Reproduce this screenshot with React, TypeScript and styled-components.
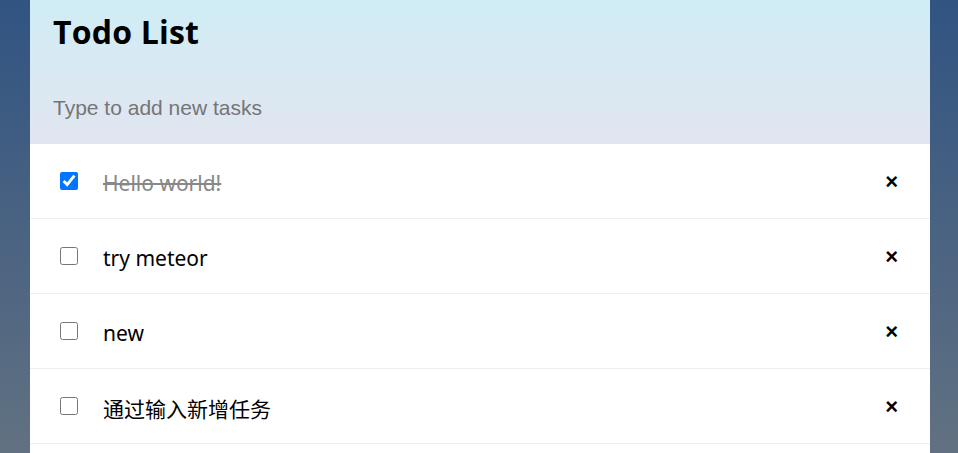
import React, { useState } from "react";
import styled, { createGlobalStyle } from "styled-components";

const GlobalStyle = createGlobalStyle`
    html, body {
        margin: 0;
        padding: 0;
    }
    body {
        font-family: "Noto Sans", "Noto Sans CJK SC", sans-serif;
        background-color: #315481;
        background-image: linear-gradient(to bottom, #315481, #918e82 900px);
        min-height: 453px;
        overflow: hidden;
    }
`;

const Page = styled.div`
    min-height: 453px;
    padding: 0 28px 0 30px;
`;

const Container = styled.div`
    background: #ffffff;
    min-height: 453px;
`;

const Header = styled.header`
    background-image: linear-gradient(to bottom, #d0edf5, #e1e5f0);
    padding: 12px 23px 0 23px;
    height: 144px;
    box-sizing: border-box;
    display: flex;
    flex-direction: column;
`;

const Title = styled.h1`
    margin: 0;
    font-family: "Open Sans", "Noto Sans", sans-serif;
    font-weight: 700;
    font-size: 32px;
    line-height: 40px;
    letter-spacing: 0.2px;
    color: #000;
`;

const NewTask = styled.input`
    margin-top: 43px;
    border: none;
    background: transparent;
    padding: 0;
    height: 26px;
    font-family: "Liberation Sans", Arial, sans-serif;
    font-size: 21px;
    outline: none;
    &::placeholder {
        color: #757575;
    }
`;

const List = styled.ul`
    margin: 0;
    padding: 0;
`;

const Row = styled.li<{ $checked?: boolean }>`
    list-style: none;
    display: flex;
    align-items: center;
    height: 74px;
    padding: 0 32px 0 29px;
    border-bottom: 1px solid #eeeeee;
    color: ${p => (p.$checked ? "#888888" : "#000000")};
`;

const Check = styled.input`
    width: 18px;
    height: 18px;
    margin: 0 0 0 1px;
    accent-color: #0075ff;
`;

const Text = styled.span<{ $checked?: boolean }>`
    flex: 1;
    margin-left: 25px;
    padding-top: 3px;
    font-size: 21px;
    text-decoration: ${p => (p.$checked ? "line-through" : "none")};
`;

const Delete = styled.button`
    border: none;
    background: none;
    padding: 2px 0 0;
    font-family: "Liberation Sans", Arial, sans-serif;
    font-weight: 700;
    font-size: 22px;
    line-height: 22px;
    color: #000;
    cursor: pointer;
`;

const initial = [
    { id: 1, text: "Hello world!", checked: true },
    { id: 2, text: "try meteor", checked: false },
    { id: 3, text: "new", checked: false },
    { id: 4, text: "通过输入新增任务", checked: false },
];

export default function App() {
    const [tasks, setTasks] = useState(initial);

    const toggle = (id: number) =>
        setTasks(tasks.map(t => (t.id === id ? { ...t, checked: !t.checked } : t)));

    return (
        <>
            <GlobalStyle />
            <Page>
                <Container>
                    <Header>
                        <Title>Todo List</Title>
                        <NewTask type="text" placeholder="Type to add new tasks" />
                    </Header>
                    <List>
                        {tasks.map(t => (
                            <Row key={t.id} $checked={t.checked}>
                                <Check type="checkbox" checked={t.checked} onChange={() => toggle(t.id)} />
                                <Text $checked={t.checked}>{t.text}</Text>
                                <Delete onClick={() => setTasks(tasks.filter(x => x.id !== t.id))}>×</Delete>
                            </Row>
                        ))}
                    </List>
                </Container>
            </Page>
        </>
    );
}
